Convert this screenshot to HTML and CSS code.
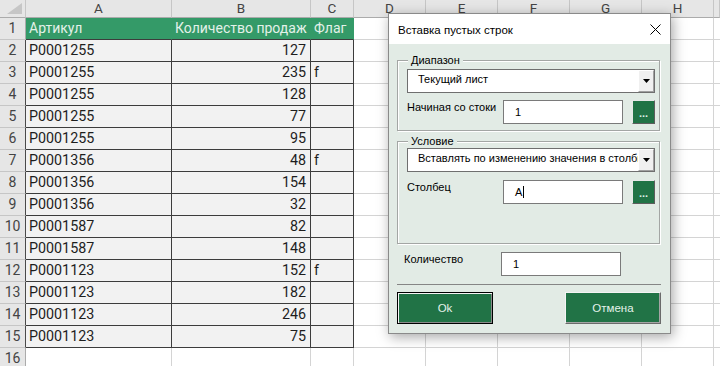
FILE: index.html
```html
<!DOCTYPE html>
<html lang="ru">
<head>
<meta charset="utf-8">
<title>Вставка пустых строк</title>
<link rel="stylesheet" href="styles.css">
</head>
<body>
<div class="grid">
  <div class="x ch corner"><svg class="tri" width="15" height="11" viewBox="0 0 15 11"><polygon points="15,0 15,11 0,11" fill="#c6c6c6"/></svg></div>
  <div class="x ch">A</div><div class="x ch">B</div><div class="x ch">C</div><div class="x ch">D</div><div class="x ch">E</div><div class="x ch">F</div><div class="x ch">G</div><div class="x ch">H</div><div class="x ch"></div>

  <div class="x rh">1</div><div class="x d g">Артикул</div><div class="x d g">Количество продаж</div><div class="x d g gl">Флаг</div><div class="x"></div><div class="x"></div><div class="x"></div><div class="x"></div><div class="x"></div><div class="x"></div>
  <div class="x rh dk">2</div><div class="x d">P0001255</div><div class="x d n">127</div><div class="x d"></div><div class="x"></div><div class="x"></div><div class="x"></div><div class="x"></div><div class="x"></div><div class="x"></div>
  <div class="x rh dk">3</div><div class="x d">P0001255</div><div class="x d n">235</div><div class="x d">f</div><div class="x"></div><div class="x"></div><div class="x"></div><div class="x"></div><div class="x"></div><div class="x"></div>
  <div class="x rh dk">4</div><div class="x d">P0001255</div><div class="x d n">128</div><div class="x d"></div><div class="x"></div><div class="x"></div><div class="x"></div><div class="x"></div><div class="x"></div><div class="x"></div>
  <div class="x rh dk">5</div><div class="x d">P0001255</div><div class="x d n">77</div><div class="x d"></div><div class="x"></div><div class="x"></div><div class="x"></div><div class="x"></div><div class="x"></div><div class="x"></div>
  <div class="x rh dk">6</div><div class="x d">P0001255</div><div class="x d n">95</div><div class="x d"></div><div class="x"></div><div class="x"></div><div class="x"></div><div class="x"></div><div class="x"></div><div class="x"></div>
  <div class="x rh dk">7</div><div class="x d">P0001356</div><div class="x d n">48</div><div class="x d">f</div><div class="x"></div><div class="x"></div><div class="x"></div><div class="x"></div><div class="x"></div><div class="x"></div>
  <div class="x rh dk">8</div><div class="x d">P0001356</div><div class="x d n">154</div><div class="x d"></div><div class="x"></div><div class="x"></div><div class="x"></div><div class="x"></div><div class="x"></div><div class="x"></div>
  <div class="x rh dk">9</div><div class="x d">P0001356</div><div class="x d n">32</div><div class="x d"></div><div class="x"></div><div class="x"></div><div class="x"></div><div class="x"></div><div class="x"></div><div class="x"></div>
  <div class="x rh dk">10</div><div class="x d">P0001587</div><div class="x d n">82</div><div class="x d"></div><div class="x"></div><div class="x"></div><div class="x"></div><div class="x"></div><div class="x"></div><div class="x"></div>
  <div class="x rh dk">11</div><div class="x d">P0001587</div><div class="x d n">148</div><div class="x d"></div><div class="x"></div><div class="x"></div><div class="x"></div><div class="x"></div><div class="x"></div><div class="x"></div>
  <div class="x rh dk">12</div><div class="x d">P0001123</div><div class="x d n">152</div><div class="x d">f</div><div class="x"></div><div class="x"></div><div class="x"></div><div class="x"></div><div class="x"></div><div class="x"></div>
  <div class="x rh dk">13</div><div class="x d">P0001123</div><div class="x d n">182</div><div class="x d"></div><div class="x"></div><div class="x"></div><div class="x"></div><div class="x"></div><div class="x"></div><div class="x"></div>
  <div class="x rh dk">14</div><div class="x d">P0001123</div><div class="x d n">246</div><div class="x d"></div><div class="x"></div><div class="x"></div><div class="x"></div><div class="x"></div><div class="x"></div><div class="x"></div>
  <div class="x rh dk">15</div><div class="x d">P0001123</div><div class="x d n">75</div><div class="x d"></div><div class="x"></div><div class="x"></div><div class="x"></div><div class="x"></div><div class="x"></div><div class="x"></div>
  <div class="x rh">16</div><div class="x"></div><div class="x"></div><div class="x"></div><div class="x"></div><div class="x"></div><div class="x"></div><div class="x"></div><div class="x"></div><div class="x"></div>
</div>

<div class="dialog">
  <div class="titlebar">
    <span class="title">Вставка пустых строк</span>
    <svg class="close" width="11" height="11" viewBox="0 0 11 11"><path d="M0.5 0.5L10.5 10.5M10.5 0.5L0.5 10.5" stroke="#000" stroke-width="1" fill="none"/></svg>
  </div>
  <div class="dbody">
    <div class="frame f1">
      <span class="legend">Диапазон</span>
      <div class="combo"><span class="ctext">Текущий лист</span><span class="drop"><svg width="7" height="4" viewBox="0 0 7 4"><polygon points="0,0 7,0 3.5,4" fill="#000"/></svg></span></div>
      <div class="frow">
        <span class="lbl">Начиная со стоки</span>
        <div class="tbox">1</div>
        <div class="gbtn">...</div>
      </div>
    </div>
    <div class="frame f2">
      <span class="legend">Условие</span>
      <div class="combo"><span class="ctext">Вставлять по изменению значения в столбце</span><span class="drop"><svg width="7" height="4" viewBox="0 0 7 4"><polygon points="0,0 7,0 3.5,4" fill="#000"/></svg></span></div>
      <div class="frow">
        <span class="lbl">Столбец</span>
        <div class="tbox">A<span class="caret"></span></div>
        <div class="gbtn">...</div>
      </div>
    </div>
    <div class="qrow">
      <span class="lbl">Количество</span>
      <div class="tbox">1</div>
    </div>
    <div class="sep"></div>
    <div class="btns">
      <div class="btn ok">Ok</div>
      <div class="btn cancel">Отмена</div>
    </div>
  </div>
</div>
</body>
</html>
```

FILE: styles.css
```css
html, body {
  margin: 0;
  padding: 0;
}
body {
  width: 720px;
  height: 366px;
  overflow: hidden;
  position: relative;
  background: #ffffff;
  font-family: Roboto, "Noto Sans", sans-serif;
}

/* spreadsheet */
.grid {
  display: grid;
  grid-template-columns: 26px 146px 139px 43px 72px 72px 72px 72px 72px 6px;
  grid-template-rows: 18px repeat(16, 22px);
}
.x {
  box-sizing: border-box;
  border-right: 1px solid #d4d4d4;
  border-bottom: 1px solid #d4d4d4;
  font-size: 14.3px;
  line-height: 21px;
  padding: 0 4px 0 3px;
  white-space: nowrap;
  overflow: hidden;
  color: #1e1e1e;
}
.ch {
  background: #e6e6e6;
  border-right-color: #c6c6c6;
  border-bottom-color: #ababab;
  text-align: center;
  color: #444444;
  font-size: 13.5px;
  line-height: 17px;
  padding: 0;
}
.corner {
  position: relative;
}
.tri {
  position: absolute;
  right: 3px;
  bottom: 3px;
}
.rh {
  background: #e6e6e6;
  border-right-color: #ababab;
  border-bottom-color: #c6c6c6;
  text-align: center;
  color: #444444;
  font-size: 14px;
  padding: 0;
}
.rh.dk {
  border-right-color: #4a4a4a;
}
.d {
  background: #f2f2f2;
  border-color: #3c3c3c;
}
.g {
  background: #349a68;
  color: #e3f1e9;
  font-size: 14px;
  border-right-color: #349a68;
  border-bottom-color: #3c3c3c;
}
.n {
  text-align: right;
}

/* dialog */
.dialog {
  position: absolute;
  left: 388px;
  top: 13px;
  width: 283px;
  box-sizing: border-box;
  border: 1px solid #8a8a8a;
  background: #e2ebe5;
  box-shadow: 2px 3px 12px rgba(0, 0, 0, 0.35);
  font-family: "Liberation Sans", Arial, sans-serif;
  font-size: 11px;
  color: #000;
}
.titlebar {
  height: 30px;
  background: #ffffff;
  display: flex;
  align-items: center;
  padding: 0 9px;
}
.title {
  font-size: 11.5px;
  padding-top: 1px;
}
.close {
  margin-left: auto;
  margin-right: 0;
}
.dbody {
  padding: 16px 10px 9px 8px;
}
.frame {
  position: relative;
  box-sizing: border-box;
  width: 263px;
  border: 1px solid #a3a6a4;
  box-shadow: inset 1px 1px 0 #ffffff, 1px 1px 0 #ffffff;
  padding: 0 4px 0 9px;
}
.f1 {
  padding-top: 8px;
  padding-bottom: 6px;
}
.f2 {
  margin-top: 10px;
  height: 103px;
  padding-top: 6px;
}
.legend {
  position: absolute;
  left: 10px;
  top: -8px;
  padding: 0 3px;
  line-height: 14px;
  background: #e2ebe5;
}
.combo {
  box-sizing: border-box;
  width: 248px;
  height: 24px;
  border: 1px solid #6f6f6f;
  background: #ffffff;
  display: flex;
  align-items: stretch;
}
.ctext {
  flex: 1;
  overflow: hidden;
  white-space: nowrap;
  padding-left: 10px;
  line-height: 19px;
}
.drop {
  width: 16px;
  box-sizing: border-box;
  background: #f0f0f0;
  border-left: 1px solid #ffffff;
  border-top: 1px solid #ffffff;
  border-right: 1px solid #a0a0a0;
  border-bottom: 1px solid #a0a0a0;
  display: flex;
  align-items: center;
  justify-content: center;
}
.frow {
  display: flex;
  align-items: flex-start;
  margin-top: 7px;
}
.f2 .frow {
  margin-top: 8px;
}
.lbl {
  width: 96px;
  line-height: 14px;
  white-space: nowrap;
}
.tbox {
  box-sizing: border-box;
  width: 120px;
  height: 24px;
  border: 1px solid #7a7a7a;
  background: #ffffff;
  padding-left: 11px;
  line-height: 20px;
  display: flex;
  align-items: center;
}
.caret {
  display: inline-block;
  width: 1px;
  height: 12px;
  background: #000;
  margin-left: 1px;
}
.gbtn {
  box-sizing: border-box;
  width: 23px;
  height: 24px;
  margin-left: 9px;
  background: #217346;
  border-top: 1px solid #e8e8e8;
  border-left: 1px solid #e8e8e8;
  border-right: 1px solid #5e5e5e;
  border-bottom: 1px solid #5e5e5e;
  color: #dcefe4;
  text-align: center;
  line-height: 24px;
  font-size: 11px;
  font-weight: bold;
}
.qrow {
  display: flex;
  align-items: flex-start;
  margin-top: 8px;
  padding-left: 7px;
}
.qrow .lbl {
  width: 97px;
}
.sep {
  margin-top: 8px;
  width: 264px;
  border-top: 1px solid #858585;
}
.btns {
  display: flex;
  justify-content: space-between;
  margin-top: 7px;
  width: 264px;
}
.btn {
  box-sizing: border-box;
  width: 96px;
  height: 32px;
  background: #217346;
  color: #e4f2ea;
  display: flex;
  align-items: center;
  justify-content: center;
  font-size: 11.5px;
}
.ok {
  border: 1px solid #000000;
  box-shadow: inset 1px 1px 0 #f4f4f4, inset -1px -1px 0 #8a8a8a;
}
.cancel {
  border-top: 1px solid #f4f4f4;
  border-left: 1px solid #f4f4f4;
  border-right: 1px solid #6b6b6b;
  border-bottom: 1px solid #6b6b6b;
  box-shadow: inset -1px -1px 0 #a5a5a5;
}
```
